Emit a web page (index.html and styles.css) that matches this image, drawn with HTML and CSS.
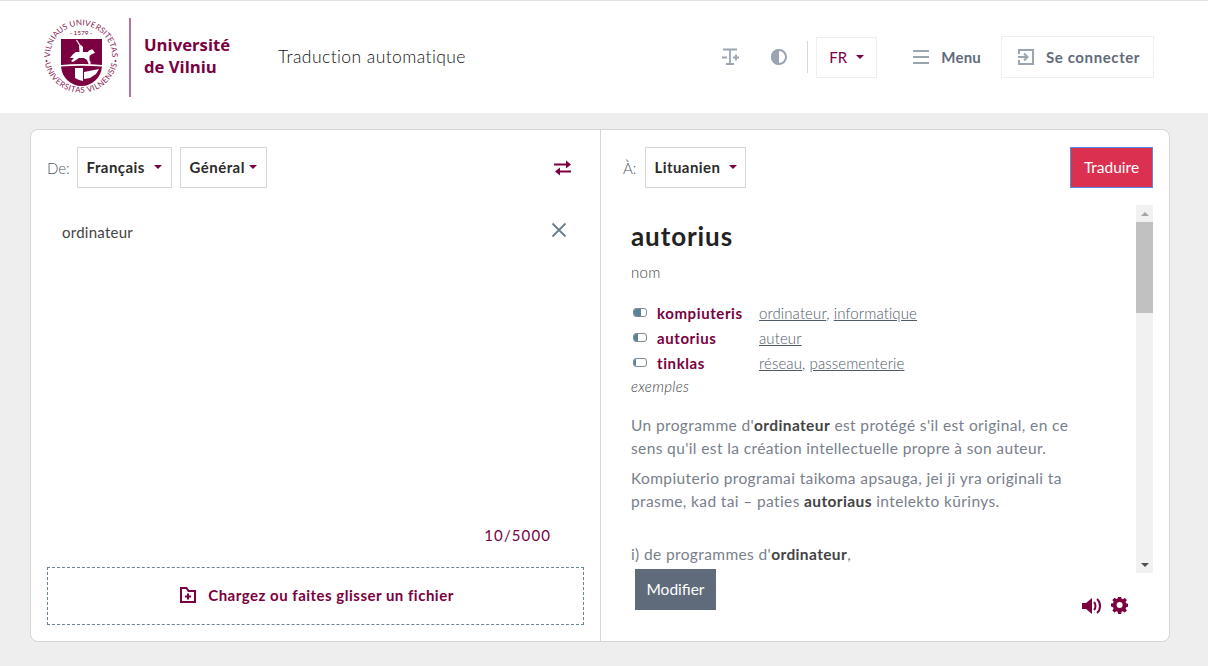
FILE: index.html
```html
<!DOCTYPE html>
<html lang="fr">
<head>
<meta charset="utf-8">
<title>Traduction automatique</title>
<link rel="stylesheet" href="styles.css">
</head>
<body>
<header class="header">
  <a class="brand">
    <svg class="seal" width="76" height="80" viewBox="0 0 76 80">
      <defs>
        <path id="arcTop" d="M16.100 62.300 A31 31 0 1 1 59.900 62.300"/>
        <path id="arcBottom" d="M5 23 A37 37 0 1 0 71 23"/>
      </defs>
      <text class="seal-text seal-text-top"><textPath href="#arcTop" startOffset="50%" text-anchor="middle">VILNIAUS UNIVERSITETAS</textPath></text>
      <text class="seal-text seal-text-bottom"><textPath href="#arcBottom" startOffset="50%" text-anchor="middle">UNIVERSITAS VILNENSIS</textPath></text>
      <text class="seal-year" x="38" y="18.500" text-anchor="middle">· 1579 ·</text>
      <circle cx="3.500" cy="45" r="1" fill="#8a2358"/>
      <circle cx="72.500" cy="45" r="1" fill="#8a2358"/>
      <path fill="#7a0040" d="M18 23H59V49Q38 47 18 49Z"/>
      <path fill="#7a0040" d="M18 50.500Q38 49 59 50.500C58 62 49 70 38.500 70C28 70 19 62 18 50.500Z"/>
      <path fill="#fff" d="M27 42C29 39 31 37 33 36L36.500 36L36 30L38 29L40 31L40 36L45 36C46 34 48 33 50 34L52 37L49 38L46.500 40L46.500 44L48 47L46 49L44 44L41 42L36 42L33 44L30 46L28 45L31 42Z"/>
      <path fill="none" stroke="#fff" stroke-width="1.200" d="M33.500 24L38 31"/>
      <path fill="#fff" d="M32 52H40V65L36 64L32 62ZM41 56L56 53L53 58L47 62L41 63Z"/>
    </svg>
    <span class="brand-rule"></span>
    <span class="brand-name">Université<br>de Vilniu</span>
  </a>
  <span class="app-title">Traduction automatique</span>
  <nav class="tools">
    <button class="icon-btn icon-btn-text" aria-label="Taille du texte">
      <svg width="18" height="18" viewBox="0 0 18 18" fill="none" stroke="#9aa5b1" stroke-width="1.800"><path d="M1 1.500H15M8 1.500V16M4 16H12M0 9.500H5M11 9.500H17M14 6.500V12.500"/></svg>
    </button>
    <button class="icon-btn icon-btn-contrast" aria-label="Contraste">
      <svg width="16" height="16" viewBox="0 0 16 16"><circle cx="8" cy="8" r="7" fill="none" stroke="#9aa5b1" stroke-width="2"/><path d="M8 0A8 8 0 0 0 8 16Z" fill="#9aa5b1"/></svg>
    </button>
    <span class="tools-rule"></span>
    <button class="lang-btn">FR<span class="caret"></span></button>
    <button class="menu-btn">
      <svg width="16" height="14" viewBox="0 0 16 14" fill="none" stroke="#9aa5b1" stroke-width="2"><path d="M0 1h16M0 7h16M0 13h16"/></svg>
      Menu
    </button>
    <button class="login-btn">
      <svg width="16" height="16" viewBox="0 0 16 16" fill="none" stroke="#9aa5b1" stroke-width="2"><path d="M1 5V1h14v14H1v-4M0 8h9M6 4.500l3.500 3.500L6 11.500"/></svg>
      Se connecter
    </button>
  </nav>
</header>

<main class="page">
  <section class="card">
    <div class="pane pane-source">
      <div class="bar">
        <span class="bar-label">De:</span>
        <button class="select select-fr">Français<span class="caret"></span></button>
        <button class="select select-domain">Général<span class="caret"></span></button>
        <button class="swap" aria-label="Inverser">
          <svg width="18" height="16" viewBox="0 0 18 16"><path fill="#7a0040" d="M0 3.500H12V0.500L17 4.500L12 8.500V5.500H0ZM17 10.500H6V7.500L1 11.500L6 15.500V12.500H17Z"/></svg>
        </button>
      </div>
      <div class="source-text">
        <span>ordinateur</span>
        <svg class="clear" width="16" height="16" viewBox="0 0 16 16" fill="none" stroke="#6c7f8c" stroke-width="1.800"><path d="M1.500 1.500l13 13M14.500 1.500l-13 13"/></svg>
      </div>
      <div class="counter">10/5000</div>
      <div class="drop">
        <svg width="16" height="16" viewBox="0 0 16 16"><path fill="#7a0040" fill-rule="evenodd" d="M0 0h7l2 3h7v13H0zM2 2v12h12V5H8L6 2z"/><path fill="#7a0040" d="M7 6.500h2v2h2v2H9v2H7v-2H5v-2h2z"/></svg>
        Chargez ou faites glisser un fichier
      </div>
    </div>
    <div class="pane pane-target">
      <div class="bar">
        <span class="bar-label bar-label-target">À:</span>
        <button class="select select-lt">Lituanien<span class="caret"></span></button>
        <button class="translate">Traduire</button>
      </div>
      <div class="result">
        <div class="result-body">
          <h2 class="word">autorius</h2>
          <p class="pos">nom</p>
          <div class="terms">
            <span class="meter"><i class="meter-fill meter-60"></i></span><b class="term">kompiuteris</b><span class="links"><a>ordinateur</a>, <a>informatique</a></span>
            <span class="meter"><i class="meter-fill meter-30"></i></span><b class="term">autorius</b><span class="links"><a>auteur</a></span>
            <span class="meter"><i class="meter-fill meter-15"></i></span><b class="term">tinklas</b><span class="links"><a>réseau</a>, <a>passementerie</a></span>
          </div>
          <p class="examples">exemples</p>
          <p class="para">Un programme d'<b>ordinateur</b> est protégé s'il est original, en ce<br>sens qu'il est la création intellectuelle propre à son auteur.</p>
          <p class="para">Kompiuterio programai taikoma apsauga, jei ji yra originali ta<br>prasme, kad tai – paties <b>autoriaus</b> intelekto kūrinys.</p>
          <p class="para para-gap">i) de programmes d'<b>ordinateur</b>,</p>
        </div>
        <div class="scrollbar">
          <span class="scroll-arrow"><i class="arrow-up"></i></span>
          <span class="scroll-track"><i class="scroll-thumb"></i></span>
          <span class="scroll-arrow"><i class="arrow-down"></i></span>
        </div>
      </div>
      <div class="actions">
        <button class="edit">Modifier</button>
        <svg class="speaker" width="20" height="18" viewBox="0 0 20 18"><path fill="#7a0040" d="M0 6h4l6-5v16l-6-5H0z"/><path fill="none" stroke="#7a0040" stroke-width="2" d="M12 5c2 2 2 6 0 8M15 2c4 3 4 11 0 14"/></svg>
        <svg class="gear" width="17" height="17" viewBox="0 0 16 16"><path fill="#7a0040" fill-rule="evenodd" d="M6.500 0h3l.4 2.200 1.300.6L13.100 1.500l2.100 2.100-1.300 1.900.6 1.300 2.200.4v3l-2.200.4-.6 1.300 1.300 1.900-2.100 2.100-1.900-1.300-1.300.6-.4 2.200h-3l-.4-2.200-1.300-.6-1.900 1.300-2.100-2.100 1.300-1.900-.6-1.300L-.7 10V7l2.200-.4.600-1.300-1.300-1.900 2.100-2.100 1.900 1.300 1.300-.6zM8 5.500a3 3 0 1 0 0 6 3 3 0 0 0 0-6z" transform="translate(.5 -.5) scale(.95)"/></svg>
      </div>
    </div>
  </section>
</main>
</body>
</html>
```
FILE: styles.css
```css
* { box-sizing: border-box; }
html, body { margin: 0; height: 100%; }
body {
  background: #eee;
  font-family: "Lato", "Liberation Sans", sans-serif;
  color: #333;
  overflow: hidden;
}
button { font-family: inherit; background: #fff; padding: 0; cursor: pointer; }

.header {
  display: flex;
  align-items: center;
  height: 113px;
  padding: 0 54px 0 43px;
  background: #fff;
  border-top: 1px solid #e0e2e6;
}
.brand { display: flex; align-items: center; }
.seal { display: block; margin-top: -2px; overflow: visible; }
.seal-text { font-family: "Lato", sans-serif; fill: #8a2358; }
.seal-text-top { font-size: 8px; letter-spacing: .1px; }
.seal-text-bottom { font-size: 8px; letter-spacing: .45px; }
.seal-year { font: 6.500px "Lato", sans-serif; fill: #7a0040; }
.brand-rule { width: 2px; height: 79px; margin-left: 10px; background: #b8739a; }
.brand-name {
  margin-left: 13px;
  margin-top: -3px;
  font: 700 16.700px/22px "Open Sans", sans-serif;
  color: #7a0040;
}
.app-title { margin-left: 48px; margin-top: -2px; font-size: 17.500px; font-weight: 300; color: #111; letter-spacing: .42px; }

.tools { display: flex; align-items: center; margin-left: auto; }
.icon-btn { border: 0; display: flex; }
.icon-btn-contrast { margin-left: 31px; }
.tools-rule { width: 1px; height: 32px; margin: 0 8px 0 20px; background: #d5d8dc; }
.lang-btn {
  display: flex; align-items: center; justify-content: center;
  width: 61px; height: 41px;
  border: 1px solid #eee;
  color: #7a0040;
  font-size: 15px;
}
.menu-btn, .login-btn {
  display: flex; align-items: center;
  color: #5f6b7a;
  font-size: 15px;
  font-weight: 700;
}
.menu-btn { border: 0; gap: 12px; margin-left: 36px; letter-spacing: .2px; }
.login-btn { gap: 12px; width: 153px; height: 42px; margin-left: 20px; padding-left: 16px; border: 1px solid #eee; letter-spacing: .6px; }
.caret {
  display: inline-block;
  margin-left: 9px;
  border: 4.500px solid transparent;
  border-top-color: #7a0040;
  border-bottom: 0;
}

.page { padding: 16px 38px 0 30px; }
.card {
  display: flex;
  height: 513px;
  background: #fff;
  border: 1px solid #d6d6d6;
  border-radius: 8px;
}
.pane { display: flex; flex-direction: column; padding-top: 17px; }
.pane-source { width: 570px; padding-left: 16px; padding-right: 16px; border-right: 1px solid #d6d6d6; }
.pane-target { flex: 1; padding-left: 22px; padding-right: 16px; }

.bar { display: flex; align-items: center; height: 41px; }
.bar-label { font-size: 15px; font-weight: 300; color: #4f5b69; margin-right: 7px; }
.bar-label-target { margin-right: 9px; }
.select {
  display: flex; align-items: center; justify-content: center;
  height: 41px;
  padding-bottom: 2px;
  border: 1px solid #d6d6d6;
  font-size: 15px;
  font-weight: 700;
  color: #2b2b2b;
  letter-spacing: .45px;
}
.select-fr { width: 95px; }
.select-domain { width: 87px; margin-left: 8px; }
.select-domain .caret { margin-left: 4px; }
.select-lt { width: 101px; }
.swap { margin-left: auto; margin-right: 12px; border: 0; display: flex; }
.translate {
  margin-left: auto;
  width: 83px; height: 41px;
  padding-bottom: 2px;
  background: #dc3050;
  border: 1px solid #4d8fe8;
  color: #fff;
  font-size: 15.500px;
}

.source-text {
  display: flex;
  justify-content: space-between;
  align-items: center;
  height: 28px;
  margin-top: 30px;
  padding: 0 17px 0 15px;
  font-size: 15px;
  color: #444;
  letter-spacing: .25px;
}
.clear { margin-top: -4px; }
.counter {
  margin-top: auto;
  padding-right: 33px;
  text-align: right;
  font-size: 15px;
  letter-spacing: 1.100px;
  color: #7a0040;
}
.drop {
  display: flex; align-items: center; justify-content: center;
  gap: 12px;
  height: 58px;
  margin: 23px 0 16px;
  padding: 0 0 2px 3px;
  border: 1px dashed #6c8592;
  color: #7a0040;
  font-size: 15px;
  font-weight: 700;
  letter-spacing: .5px;
}

.result {
  display: flex;
  height: 368px;
  margin: 17px 0 0 -7px;
  overflow: hidden;
}
.result-body { flex: 1; padding-left: 15px; overflow: hidden; }
.scrollbar { display: flex; flex-direction: column; flex: none; width: 17px; background: #f1f1f1; }
.scroll-arrow { display: flex; align-items: center; justify-content: center; flex: none; height: 17px; }
.arrow-up, .arrow-down { border: 4px solid transparent; }
.arrow-up { border-top: 0; border-bottom-color: #a3a3a3; }
.arrow-down { border-bottom: 0; border-top-color: #505050; }
.scroll-track { flex: 1; }
.scroll-thumb { display: block; height: 91px; background: #c1c1c1; }
.word { margin: 12px 0 0; font-size: 26px; line-height: 38px; font-weight: 700; color: #222; letter-spacing: .9px; }
.pos { margin: 6px 0 0; font-size: 15px; line-height: 22px; font-weight: 300; color: #444; letter-spacing: .3px; }
.terms {
  display: grid;
  grid-template-columns: 26px 102px 1fr;
  grid-auto-rows: 25px;
  align-items: center;
  margin-top: 17px;
}
.meter {
  display: block;
  width: 14px; height: 9px;
  margin-left: 2px;
  border: 1px solid #7d8b96;
  border-radius: 3px;
  overflow: hidden;
}
.meter-fill { display: block; height: 100%; background: #5a8299; }
.meter-60 { width: 60%; }
.meter-30 { width: 30%; }
.meter-15 { width: 15%; }
.term { font-size: 15px; color: #7a0040; letter-spacing: .6px; }
.links { font-size: 15px; font-weight: 300; color: #4f5b69; letter-spacing: .1px; }
.links a { text-decoration: underline; }
.examples { margin: 0; font-size: 15px; line-height: 22px; font-style: italic; font-weight: 300; color: #444; letter-spacing: .3px; }
.para { margin: 0 0 7px; font-size: 15.500px; line-height: 23px; color: #78808c; letter-spacing: .38px; }
.para b { color: #444; }
.examples + .para { margin-top: 17px; }
.para-gap { margin-top: 30px; }

.actions { display: flex; align-items: center; height: 41px; margin: -4px 0 0 12px; position: relative; }
.edit {
  width: 81px; height: 41px;
  padding-bottom: 2px;
  background: #5f6b7a;
  border: 0;
  color: #fff;
  font-size: 15.500px;
}
.speaker { margin-left: auto; margin-top: 32px; }
.gear { margin: 32px 25px 0 9px; }
```
